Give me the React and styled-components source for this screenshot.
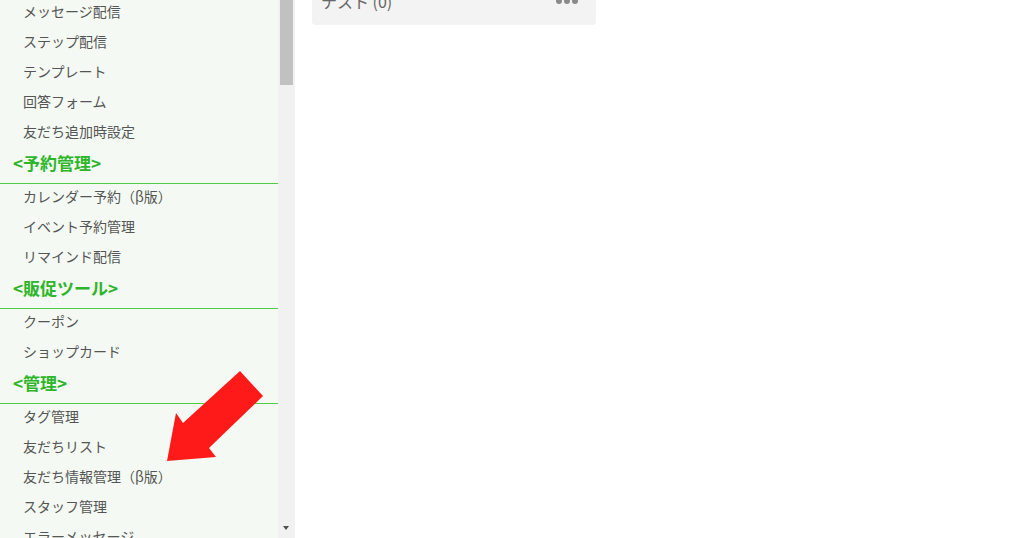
import React from "react";
import styled, { createGlobalStyle } from "styled-components";

const sections = [
  {
    title: null,
    items: ["メッセージ配信", "ステップ配信", "テンプレート", "回答フォーム", "友だち追加時設定"],
  },
  {
    title: "<予約管理>",
    items: ["カレンダー予約（β版）", "イベント予約管理", "リマインド配信"],
  },
  {
    title: "<販促ツール>",
    items: ["クーポン", "ショップカード"],
  },
  {
    title: "<管理>",
    items: ["タグ管理", "友だちリスト", "友だち情報管理（β版）", "スタッフ管理", "エラーメッセージ"],
  },
];

const GlobalStyle = createGlobalStyle`
  html, body {
    margin: 0;
    padding: 0;
    background: #ffffff;
    overflow: hidden;
  }
  body {
    font-family: "Noto Sans CJK JP", "Noto Sans", sans-serif;
  }
`;

const App = () => {
  return (
    <>
      <GlobalStyle />
      <StyledPage>
        <StyledSidebar>
          <StyledMenu>
            {sections.map((section, i) => (
              <React.Fragment key={i}>
                {section.title && <StyledHeading>{section.title}</StyledHeading>}
                {section.items.map((item) => (
                  <StyledItem key={item}>{item}</StyledItem>
                ))}
              </React.Fragment>
            ))}
          </StyledMenu>
          <StyledScrollbar>
            <StyledThumb />
            <StyledDownArrow />
          </StyledScrollbar>
          {/* red pointer drawn over the menu */}
          <StyledArrow viewBox="0 0 300 538" width="300" height="538">
            <polygon
              points="167,461 176,413 183,423 240,371 263,396 209,448 216,457"
              fill="#ff1a1a"
            />
          </StyledArrow>
        </StyledSidebar>
        <StyledMain>
          <StyledCard>
            <StyledCardTitle>テスト (0)</StyledCardTitle>
            <StyledDots>
              <span />
              <span />
              <span />
            </StyledDots>
          </StyledCard>
        </StyledMain>
      </StyledPage>
    </>
  );
};

const StyledPage = styled.div`
  display: flex;
  width: 1024px;
  height: 538px;
  overflow: hidden;
`;

const StyledSidebar = styled.aside`
  position: relative;
  display: flex;
  width: 295px;
  height: 538px;
  overflow: hidden;
  flex-shrink: 0;
`;

const StyledMenu = styled.nav`
  width: 278px;
  height: 538px;
  overflow: hidden;
  background: #f4faf3;
  display: flex;
  flex-direction: column;
  & > :first-child {
    margin-top: -1px; /* list is scrolled */
  }
`;

const StyledItem = styled.div`
  flex-shrink: 0;
  height: 30px;
  box-sizing: border-box;
  padding: 0 0 6px 23px;
  line-height: 24px;
  font-size: 14px;
  color: #555555;
  white-space: nowrap;
`;

const StyledHeading = styled.div`
  flex-shrink: 0;
  height: 35px;
  box-sizing: border-box;
  padding: 0 0 6px 13px;
  line-height: 28px;
  font-size: 17px;
  font-weight: bold;
  color: #2fb52a;
  border-bottom: 1px solid #52cc46;
  white-space: nowrap;
`;

const StyledScrollbar = styled.div`
  position: relative;
  width: 17px;
  height: 538px;
  background: #f1f1f1;
`;

const StyledThumb = styled.div`
  margin: 0 2px 0 2px;
  height: 85px;
  background: #c1c1c1;
`;

const StyledDownArrow = styled.div`
  position: absolute;
  left: 5px;
  bottom: 8px;
  width: 0;
  height: 0;
  border-left: 3.5px solid transparent;
  border-right: 3.5px solid transparent;
  border-top: 4px solid #505050;
`;

const StyledArrow = styled.svg`
  position: absolute;
  left: 0;
  top: 0;
  pointer-events: none;
`;

const StyledMain = styled.main`
  flex: 1;
  padding: 0 0 0 17px;
`;

const StyledCard = styled.div`
  width: 284px;
  height: 44px;
  margin-top: -19px;
  box-sizing: border-box;
  padding: 0 18px 5px 9px;
  background: #f3f3f3;
  border-radius: 4px;
  display: flex;
  align-items: center;
  justify-content: space-between;
`;

const StyledCardTitle = styled.div`
  font-size: 16px;
  color: #666666;
`;

const StyledDots = styled.div`
  display: flex;
  gap: 2px;
  margin-top: 0;
  span {
    width: 6px;
    height: 6px;
    border-radius: 50%;
    background: #8a8a8a;
  }
`;

export default App;
